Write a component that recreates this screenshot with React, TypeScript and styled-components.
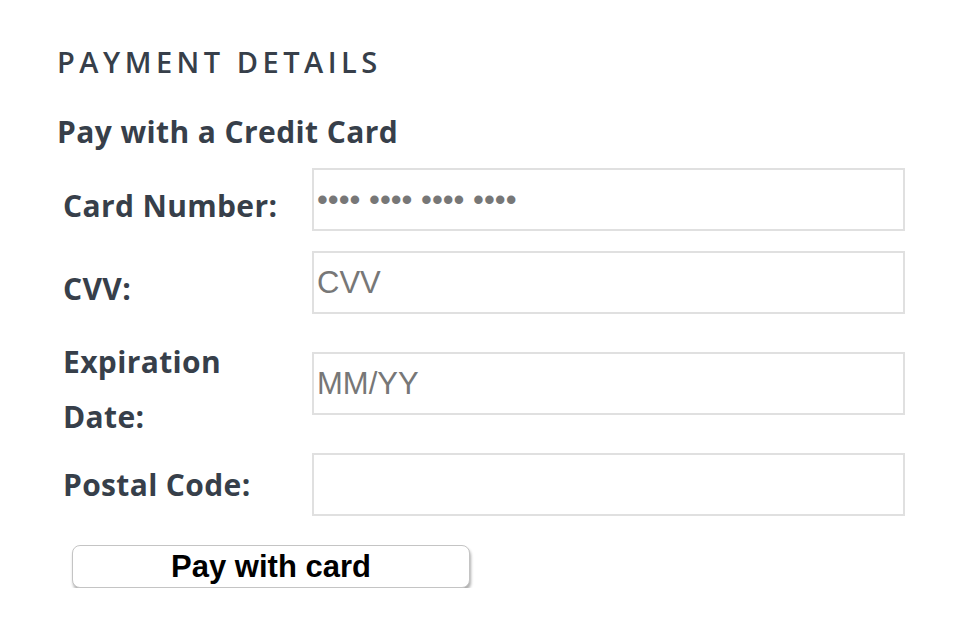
import React from "react";
import styled, { createGlobalStyle } from "styled-components";

const GlobalStyle = createGlobalStyle`
  html, body {
    margin: 0;
    padding: 0;
    background: #ffffff;
  }
  body {
    font-family: "Open Sans", Lato, sans-serif;
    color: #373f4a;
  }
`;

const FormContainer = styled.div`
  padding: 45px 57px 0 57px;
`;

const Title = styled.h3`
  margin: 0;
  font-size: 29px;
  line-height: 34px;
  font-weight: 600;
  letter-spacing: 4.5px;
  text-transform: uppercase;
`;

const SubTitle = styled.h4`
  margin: 36px 0 0 0;
  font-size: 30px;
  line-height: 34px;
  font-weight: 700;
  letter-spacing: 0.4px;
`;

const FieldTable = styled.div`
  margin-top: 19px;
  padding-left: 6px;
`;

const FieldRow = styled.div`
  display: grid;
  grid-template-columns: 249px 593px;
  align-items: center;
  margin-bottom: 9px;
`;

const Label = styled.label`
  font-size: 30px;
  line-height: 55px;
  font-weight: 700;
  letter-spacing: 0.35px;
`;

const Field = styled.input<{ $last?: boolean }>`
  display: block;
  box-sizing: border-box;
  width: 593px;
  height: 63px;
  margin: 0 0 ${(p) => (p.$last ? 0 : 11)}px 0;
  padding: 0 3px;
  border: 2px solid #e0e0e0;
  border-radius: 0;
  outline: none;
  background: #ffffff;
  font-family: "Liberation Sans", Arial, sans-serif;
  font-size: 31px;
  color: #373f4a;

  &::placeholder {
    color: #777777;
    opacity: 1;
  }
`;

const PayButton = styled.button`
  display: block;
  box-sizing: border-box;
  width: 398px;
  height: 43px;
  margin: 29px 0 0 9px;
  padding: 0;
  border: 1px solid #c4c4c4;
  border-radius: 8px;
  background: #ffffff;
  box-shadow: 1px 3px 3px rgba(0, 0, 0, 0.32);
  font-family: "Liberation Sans", Arial, sans-serif;
  font-size: 31px;
  font-weight: 700;
  color: #000000;
  cursor: pointer;
`;

function App() {
  return (
    <>
      <GlobalStyle />
      <FormContainer>
        <Title>Payment Details</Title>
        <SubTitle>Pay with a Credit Card</SubTitle>
        <FieldTable>
          <FieldRow>
            <Label htmlFor="sq-card-number">Card Number:</Label>
            <Field id="sq-card-number" placeholder="•••• •••• •••• ••••" />
          </FieldRow>
          <FieldRow>
            <Label htmlFor="sq-cvv">CVV:</Label>
            <Field id="sq-cvv" placeholder="CVV" />
          </FieldRow>
          <FieldRow>
            <Label htmlFor="sq-expiration-date">
              Expiration
              <br />
              Date:
            </Label>
            <Field id="sq-expiration-date" placeholder="MM/YY" />
          </FieldRow>
          <FieldRow>
            <Label htmlFor="sq-postal-code">Postal Code:</Label>
            <Field id="sq-postal-code" $last />
          </FieldRow>
          <PayButton>Pay with card</PayButton>
        </FieldTable>
      </FormContainer>
    </>
  );
}

export default App;
